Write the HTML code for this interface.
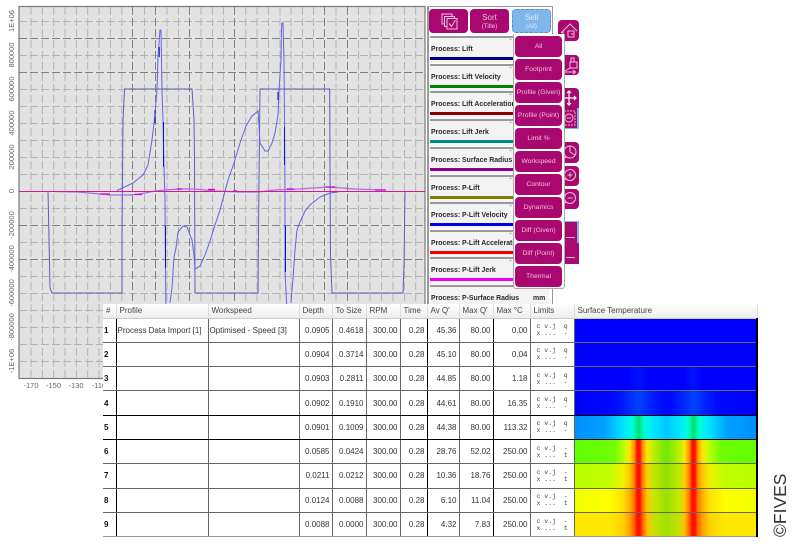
<!DOCTYPE html>
<html><head><meta charset="utf-8"><style>
html,body{margin:0;padding:0;background:#fff;width:800px;height:550px;overflow:hidden;font-family:"Liberation Sans",sans-serif}
#w{position:absolute;left:0;top:0;width:800px;height:550px;filter:blur(.3px)}
.a{position:absolute}
.btn{position:absolute;background:#a8086f;border-radius:4px;color:#eec0dc;font-size:6.8px;text-align:center;box-sizing:border-box;white-space:nowrap;overflow:hidden}
.dd{left:515px;width:47px;height:21px;line-height:21px}
.card{position:absolute;left:430px;width:83px;height:27px;background:#f3f3f3;border-top:2px solid #999;box-sizing:border-box;overflow:hidden}
.card b{position:absolute;left:1px;top:8px;font-size:6.9px;font-weight:bold;color:#2a2a2a;white-space:nowrap}
.card i{position:absolute;left:0;right:0;bottom:3px;height:3px}
.card s{position:absolute;right:1px;top:1px;width:3px;height:3px;color:#999;font-size:5px;text-decoration:none;line-height:3px}
table{position:absolute;left:103px;top:304px;border-collapse:collapse;table-layout:fixed;background:#fff;width:654px;font-size:8px;color:#333}
td,th{padding:0;overflow:hidden;white-space:nowrap;border-right:1px solid #666;border-bottom:1px solid #666}
th{height:14px;font-weight:normal;text-align:left;padding-left:3px;background:linear-gradient(#fff,#ececec);color:#444;font-size:8px;border-bottom:1px solid #ccc;border-right:1px solid #ddd;box-sizing:border-box}
td{height:24.3px;text-align:right;padding-right:2px;box-sizing:border-box}
td.n{text-align:left;font-weight:bold;color:#111;padding-left:1px;border-right:1px solid #000}
td.l{text-align:left;padding-left:1px}
td.k{border-right:1px solid #000}
td.m{font:6.5px/7px "Liberation Mono",monospace;color:#445;text-align:left;padding-left:6px;white-space:pre}
td.h{padding:0;border-right:2px solid #000}
tr.bk td{border-bottom:1px solid #000}
tr.e td{border-bottom:1px solid #999}
</style></head><body><div id="w">

<svg class="a" style="left:0;top:0" width="430" height="400" viewBox="0 0 430 400">
<rect x="19" y="6.5" width="406" height="372" fill="#e2e2e2" stroke="#777" stroke-width="1.2"/>
<g stroke="#b4b4b4" stroke-width="1" stroke-dasharray="8 3" fill="none">
<path d="M31 7V378M42.400 7V378M53.700 7V378M65 7V378M76.400 7V378M87.700 7V378M99 7V378M110.500 7V378M121.800 7V378M144.500 7V378M167 7V378M178.500 7V378M201 7V378M212.500 7V378M223.500 7V378M245.700 7V378M257 7V378M268.500 7V378M280 7V378M291 7V378M302.500 7V378M313.500 7V378M336 7V378M358.500 7V378M370 7V378M381.500 7V378M393 7V378M404.500 7V378M415.700 7V378"/>
<path d="M19 21.500H425M19 55.500H425M19 89.500H425M19 106.500H425M19 123.500H425M19 140.500H425M19 157.500H425M19 174.500H425M19 208.500H425M19 242.500H425M19 276.500H425M19 293.500H425M19 310.500H425M19 327.500H425M19 344.500H425M19 361.500H425"/>
</g>
<g stroke="#808080" stroke-width="1" stroke-dasharray="8 3" fill="none">
<path d="M132.500 7V378M155.500 7V378M189.500 7V378M234.500 7V378M324.500 7V378M347.500 7V378"/>
<path d="M19 38.500H425M19 72.500H425M19 225.500H425M19 259.500H425"/>
</g>
<path d="M48 191L48.500 214L50 288L52 293L122 293L122 238L122.500 180L123 120L124.500 89L192 89L194 120L194.500 158L195 293L258 293L259 180L260 89L329.700 89L330 160L330.500 255L332 293L403 293L404 265L405 191" fill="none" stroke="#5f5fb8" stroke-width="1"/>
<path d="M117 190.500L133 183L143 175L148 165L152 140L155 115L157 90L158 56L160 30L161 30L162 90L163 120L164 168L165 200L165.500 270L166 310M170 303L172 288L174 257L176 248L178 232L183 226L187 227L192 240L194 255L195 269L200 266L205 255L210 241L215 225L220 210L228 180L234 163L240 143L246 126L252 116L258 111L259 125L260 143L265 151L268 151L272 143L275 133L278 115L279 90L281 60L281.500 30L282 23L283 23L284 60L284.500 127L285 191L285 272L287 310M291 303L293 278L295 250L297 230L300 222L305 211L310 205L320 197L330 193L338 192" fill="none" stroke="#6464e4" stroke-width="1"/>
<path d="M159.300 47V57M163.500 122V167M165.500 226V268M155 110V123M278 92V100M284.500 127V165M285.500 226V272" stroke="#1010d8" stroke-width="1" fill="none"/>
<path d="M54 191.500L78 192L100 194L110 195L130 195L140 194L155 191L165 190L180 189L195 189L215 191L240 192L258 192L275 190L300 189L312 188L330 187L355 189L385 190" fill="none" stroke="#b068e8" stroke-width="1.200"/>
<path d="M100 194H110M135 194.500H142M177 189H182M208 189.500H215M233 191H237M287 189H294M326 187H335M375 190H386" stroke="#d000e0" stroke-width="1.200" fill="none"/>
<path d="M19 191.500H425" stroke="#d8188c" stroke-width="1"/>
<g font-size="7.5" fill="#666" font-family="Liberation Sans" text-anchor="middle">
<text transform="translate(14,21) rotate(-90)">1E+06</text>
<text transform="translate(14,55) rotate(-90)">800000</text>
<text transform="translate(14,89) rotate(-90)">600000</text>
<text transform="translate(14,123) rotate(-90)">400000</text>
<text transform="translate(14,157) rotate(-90)">200000</text>
<text transform="translate(14,191) rotate(-90)">0</text>
<text transform="translate(14,225) rotate(-90)">-200000</text>
<text transform="translate(14,259) rotate(-90)">-400000</text>
<text transform="translate(14,293) rotate(-90)">-600000</text>
<text transform="translate(14,327) rotate(-90)">-800000</text>
<text transform="translate(14,361) rotate(-90)">-1E+06</text>
<text x="31" y="388">-170</text><text x="53.500" y="388">-150</text><text x="76" y="388">-130</text><text x="99" y="388">-110</text>
</g>
</svg>

<div class="a" style="left:427px;top:6px;width:123px;height:298px;background:#fff;border:1px solid #999;border-width:1px 1px 0 2px"></div>

<div class="btn" style="left:429px;top:9px;width:39px;height:24px"><svg width="39" height="24" style="display:block"><g fill="none" stroke="#eec0dc" stroke-width="1"><path d="M13 5H23V15H13Z"/><path d="M15.500 7.500H25.500V17.500H15.500Z" fill="#a8086f"/><path d="M18 9.500H28V20H18Z" fill="#a8086f"/><path d="M20 14.500L22.500 17.500L26.500 11"/></g></svg></div>
<div class="btn" style="left:470px;top:9px;width:39px;height:24px;padding-top:5px;line-height:8px;font-size:8px">Sort<br><span style="font-size:6.2px">(Title)</span></div>
<div class="btn" style="left:512px;top:9px;width:39px;height:24px;line-height:8px;font-size:8px;background:#7fb6ec;border:1px dashed #5a8cc0;color:#e0ecfa;padding-top:4px">Sell<br><span style="font-size:6.2px">(All)</span></div>

<div class="card" style="top:36px"><b>Process: Lift</b><i style="background:#000080"></i><s>+</s></div>
<div class="card" style="top:64px"><b>Process: Lift Velocity</b><i style="background:#008000"></i><s>+</s></div>
<div class="card" style="top:91px"><b>Process: Lift Acceleration</b><i style="background:#8b0000"></i><s>+</s></div>
<div class="card" style="top:119px"><b>Process: Lift Jerk</b><i style="background:#008b8b"></i><s>+</s></div>
<div class="card" style="top:147px"><b>Process: Surface Radius</b><i style="background:#8b008b"></i><s>+</s></div>
<div class="card" style="top:175px"><b>Process: P-Lift</b><i style="background:#808000"></i><s>+</s></div>
<div class="card" style="top:202px"><b>Process: P-Lift Velocity</b><i style="background:#0000e0"></i><s>+</s></div>
<div class="card" style="top:230px"><b>Process: P-Lift Acceleration</b><i style="background:#f00000"></i><s>+</s></div>
<div class="card" style="top:257px"><b>Process: P-Lift Jerk</b><i style="background:#f000f0"></i><s>+</s></div>
<div class="card" style="top:285px;width:119px;height:20px"><b>Process: P-Surface Radius</b><b style="left:103px">mm</b></div>

<!-- right icon column -->
<div class="btn" style="left:558px;top:20px;width:21px;height:21px"><svg width="21" height="21" style="display:block"><g fill="none" stroke="#eec0dc" stroke-width="1"><path d="M3 13L12 4L19 11M5 11V18M10 17V11H16V17H10M13 14H16"/></g></svg></div>
<div class="btn" style="left:558px;top:55px;width:21px;height:20px"><svg width="21" height="20" style="display:block"><g fill="none" stroke="#eec0dc" stroke-width="1"><path d="M13 7V3H16V7M12 7H19V13H12ZM3 17H17M15 15L17.500 17L15 19M7 16L12 13"/></g></svg></div>
<div class="btn" style="left:558px;top:88px;width:21px;height:20px;border-radius:4px 4px 0 0"><svg width="21" height="20" style="display:block"><g fill="none" stroke="#fff" stroke-width="1.200"><path d="M11 3V17M5 10H18M9 5L11 3L13 5M9 15L11 17L13 15M16 8L18 10L16 12"/></g></svg></div>
<div class="btn" style="left:558px;top:108px;width:21px;height:21px;border-radius:0;border-right:2px solid #7fb6ec;border-bottom:1px solid #7fb6ec"><svg width="19" height="20" style="display:block"><rect x="6" y="3" width="11" height="14" fill="none" stroke="#e0b0d0" stroke-dasharray="2 1"/><circle cx="11" cy="10" r="4" fill="none" stroke="#eec0dc"/><path d="M9 10H13" stroke="#eec0dc"/></svg></div>
<div class="btn" style="left:558px;top:142px;width:21px;height:21px"><svg width="21" height="21" style="display:block"><circle cx="12" cy="10" r="6" fill="none" stroke="#eec0dc"/><path d="M12 10V4M12 10L17 13M8 15L5 18" stroke="#eec0dc" fill="none"/></svg></div>
<div class="btn" style="left:558px;top:166px;width:21px;height:20px"><svg width="21" height="20" style="display:block"><circle cx="12" cy="9" r="5.500" fill="none" stroke="#eec0dc"/><path d="M9.500 9H14.500M12 6.500V11.500M8 13L4 17" stroke="#eec0dc" fill="none"/></svg></div>
<div class="btn" style="left:558px;top:189px;width:21px;height:20px"><svg width="21" height="20" style="display:block"><circle cx="12" cy="9" r="5.500" fill="none" stroke="#eec0dc"/><path d="M9.500 9H14.500M8 13L4 17" stroke="#eec0dc" fill="none"/></svg></div>
<div class="btn" style="left:558px;top:221px;width:21px;height:22px;border-radius:0;border-top:1px solid #7fb6ec;border-right:2px solid #7fb6ec"><div class="a" style="left:8px;top:15px;width:9px;height:1px;background:#e0b0d0"></div></div>
<div class="btn" style="left:558px;top:243px;width:21px;height:21px;border-radius:0"><div class="a" style="left:8px;top:14px;width:9px;height:1px;background:#e0b0d0"></div></div>

<!-- dropdown -->
<div class="a" style="left:513px;top:34px;width:50px;height:254px;background:#fff;border:1px solid #aaa;border-top:0;border-radius:0 0 3px 3px"></div>
<div class="btn dd" style="top:36px">All</div>
<div class="btn dd" style="top:59px">Footprint</div>
<div class="btn dd" style="top:82px">Profile (Given)</div>
<div class="btn dd" style="top:105px">Profile (Point)</div>
<div class="btn dd" style="top:128px">Limit %</div>
<div class="btn dd" style="top:151px">Workspeed</div>
<div class="btn dd" style="top:174px">Contour</div>
<div class="btn dd" style="top:197px">Dynamics</div>
<div class="btn dd" style="top:220px">Diff (Given)</div>
<div class="btn dd" style="top:243px">Diff (Point)</div>
<div class="btn dd" style="top:266px">Thermal</div>

<table>
<colgroup><col style="width:13px"><col style="width:92px"><col style="width:91px"><col style="width:33px"><col style="width:34px"><col style="width:34px"><col style="width:27px"><col style="width:32px"><col style="width:34px"><col style="width:37px"><col style="width:44px"><col style="width:183px"></colgroup>
<tr><th style="padding-left:3px">#</th><th>Profile</th><th>Workspeed</th><th>Depth</th><th>To Size</th><th>RPM</th><th>Time</th><th>Av Q'</th><th>Max Q'</th><th>Max °C</th><th>Limits</th><th>Surface Temperature</th></tr>
<tr><td class="n">1</td><td class="l">Process Data Import [1]</td><td class="l">Optimised - Speed [3]</td><td>0.0905</td><td>0.4618</td><td>300.00</td><td class="k">0.28</td><td>45.36</td><td class="k">80.00</td><td>0.00</td><td class="m">c v.j  q
x ...  -</td><td class="h" style="background:#0000ff"></td></tr>
<tr><td class="n">2</td><td class="l"></td><td class="l"></td><td>0.0904</td><td>0.3714</td><td>300.00</td><td class="k">0.28</td><td>45.10</td><td class="k">80.00</td><td>0.04</td><td class="m">c v.j  q
x ...  -</td><td class="h" style="background:#0000ff"></td></tr>
<tr><td class="n">3</td><td class="l"></td><td class="l"></td><td>0.0903</td><td>0.2811</td><td>300.00</td><td class="k">0.28</td><td>44.85</td><td class="k">80.00</td><td>1.18</td><td class="m">c v.j  q
x ...  -</td><td class="h" style="background:linear-gradient(90deg,#0000ff 0,#0000ff 54px,#0010ff 64px,#0000ff 74px,#0000ff 109px,#0010ff 119px,#0000ff 129px)"></td></tr>
<tr class="bk"><td class="n">4</td><td class="l"></td><td class="l"></td><td>0.0902</td><td>0.1910</td><td>300.00</td><td class="k">0.28</td><td>44.61</td><td class="k">80.00</td><td>16.35</td><td class="m">c v.j  q
x ...  -</td><td class="h" style="background:linear-gradient(90deg,#0000f8 0,#0008ff 40px,#0040ff 64px,#0008ff 88px,#0008ff 95px,#0040ff 119px,#0008ff 143px,#0000f8 183px)"></td></tr>
<tr class="bk"><td class="n">5</td><td class="l"></td><td class="l"></td><td>0.0901</td><td>0.1009</td><td>300.00</td><td class="k">0.28</td><td>44.38</td><td class="k">80.00</td><td>113.32</td><td class="m">c v.j  q
x ...  -</td><td class="h" style="background:linear-gradient(90deg,#0090ff 0,#00a0ff 30px,#00e8ff 50px,#00ffd8 58px,#00e070 64px,#00ffd8 70px,#00e8ff 78px,#00c8ff 92px,#00e8ff 106px,#00ffd8 113px,#00e070 119px,#00ffd8 125px,#00e8ff 133px,#00a0ff 153px,#0090ff 183px)"></td></tr>
<tr><td class="n">6</td><td class="l"></td><td class="l"></td><td>0.0585</td><td>0.0424</td><td>300.00</td><td class="k">0.28</td><td>28.76</td><td class="k">52.02</td><td>250.00</td><td class="m">c v.j  -
x ...  t</td><td class="h" style="background:linear-gradient(90deg,#60ff00 0,#70ff00 40px,#c0ff00 50px,#ffe800 55px,#ff9000 60px,#ff1000 62.500px,#ff1000 65.500px,#ff9000 68px,#ffe800 73px,#c0f000 78px,#70e800 92px,#c0f000 106px,#ffe800 110px,#ff9000 115px,#ff1000 117.500px,#ff1000 120.500px,#ff9000 123px,#ffe800 128px,#c0ff00 134px,#70ff00 146px,#60ff00 183px)"></td></tr>
<tr><td class="n">7</td><td class="l"></td><td class="l"></td><td>0.0211</td><td>0.0212</td><td>300.00</td><td class="k">0.28</td><td>10.36</td><td class="k">18.76</td><td>250.00</td><td class="m">c v.j  -
x ...  t</td><td class="h" style="background:linear-gradient(90deg,#b8ff00 0,#c0ff00 35px,#f0f000 49px,#ffc800 55px,#ff8000 60px,#ff1000 62.500px,#ff1000 65.500px,#ff8000 68px,#ffd000 73px,#c0e800 79px,#90e000 92px,#c0e800 105px,#ffd000 110px,#ff8000 115px,#ff1000 117.500px,#ff1000 120.500px,#ff8000 123px,#ffc800 128px,#f0f000 135px,#c0ff00 150px,#b8ff00 183px)"></td></tr>
<tr><td class="n">8</td><td class="l"></td><td class="l"></td><td>0.0124</td><td>0.0088</td><td>300.00</td><td class="k">0.28</td><td>6.10</td><td class="k">11.04</td><td>250.00</td><td class="m">c v.j  -
x ...  t</td><td class="h" style="background:linear-gradient(90deg,#f0ff00 0,#ffff00 35px,#ffe000 49px,#ffb000 55px,#ff7000 60px,#ff1000 62.500px,#ff1000 65.500px,#ff7000 68px,#ffc800 73px,#c8e800 79px,#98e000 92px,#c8e800 105px,#ffc800 110px,#ff7000 115px,#ff1000 117.500px,#ff1000 120.500px,#ff7000 123px,#ffb000 128px,#ffe000 135px,#ffff00 150px,#f0ff00 183px)"></td></tr>
<tr class="e"><td class="n">9</td><td class="l"></td><td class="l"></td><td>0.0088</td><td>0.0000</td><td>300.00</td><td class="k">0.28</td><td>4.32</td><td class="k">7.83</td><td>250.00</td><td class="m">c v.j  -
x ...  t</td><td class="h" style="background:linear-gradient(90deg,#ffe800 0,#ffe800 35px,#ffd000 49px,#ffa000 55px,#ff6000 60px,#ff1000 62.500px,#ff1000 65.500px,#ff6000 68px,#ffc000 73px,#c8e000 79px,#a0e000 92px,#c8e000 105px,#ffc000 110px,#ff6000 115px,#ff1000 117.500px,#ff1000 120.500px,#ff6000 123px,#ffa000 128px,#ffd000 135px,#ffe800 150px,#ffe800 183px)"></td></tr>
</table>

<div class="a" style="left:773px;top:537px;transform-origin:0 0;transform:rotate(-90deg);font-size:17.500px;line-height:15px;color:#333;white-space:nowrap">©FIVES</div>
</div></body></html>
